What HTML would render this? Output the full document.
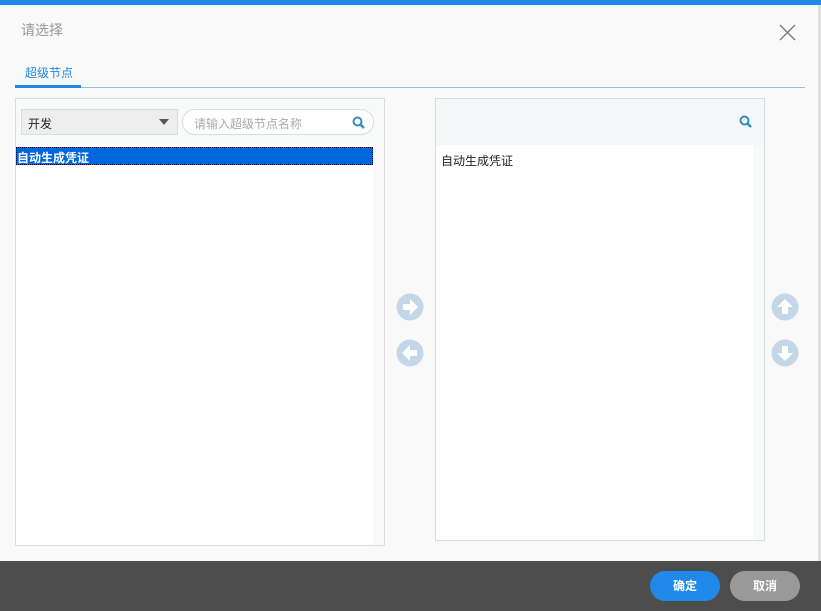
<!DOCTYPE html>
<html><head><meta charset="utf-8"><style>
*{margin:0;padding:0;box-sizing:border-box}
body{width:821px;height:611px;background:#f9f9f9;font-family:"Liberation Sans","Noto Sans CJK SC",sans-serif;position:relative;overflow:hidden;font-size:12px}
.abs{position:absolute}
</style></head><body>
<div class="abs" style="left:0;top:0;width:821px;height:5px;background:#2088e8"></div>
<div class="abs" style="left:818px;top:5px;width:3px;height:556px;background:#e0e0e0"></div>
<div class="abs" style="left:21px;top:20px;font-size:14px;color:#999">请选择</div>
<svg class="abs" style="left:779px;top:24px" width="17" height="17"><path d="M1 1L16 16M16 1L1 16" stroke="#777" stroke-width="1.3"/></svg>
<div class="abs" style="left:25px;top:64px;font-size:12px;color:#2088e8">超级节点</div>
<div class="abs" style="left:15px;top:87px;width:790px;height:1px;background:#8fbef0"></div>
<div class="abs" style="left:15px;top:85px;width:66px;height:3px;background:#2088e8"></div>

<div class="abs" style="left:15px;top:98px;width:370px;height:448px;border:1px solid #d9dde0;background:#f8f9f9"></div>
<div class="abs" style="left:21px;top:109px;width:157px;height:26px;background:#eeeeee;border:1px solid #dddddd;color:#222;padding:5px 6px;font-size:12px">开发</div>
<div class="abs" style="left:159px;top:119px;width:0;height:0;border-left:5px solid transparent;border-right:5px solid transparent;border-top:6px solid #556"></div>
<div class="abs" style="left:182px;top:109px;width:192px;height:26px;background:#fff;border:1px solid #dcdcdc;border-radius:13px;color:#aaa;padding:5px 11px;font-size:12px">请输入超级节点名称</div>
<svg class="abs" style="left:352px;top:116px" width="14" height="14"><circle cx="5.5" cy="5.5" r="4" fill="none" stroke="#2f8fc0" stroke-width="2"/><path d="M8.5 8.5L12 12" stroke="#2f8fc0" stroke-width="2.5"/></svg>
<div class="abs" style="left:16px;top:145px;width:357px;height:400px;background:#fff"></div>
<div class="abs" style="left:16px;top:147px;width:357px;height:18px;background:#0066dd;border:1px dotted #003;color:#fff;font-weight:bold;font-size:12px;padding:1px 0 0 0">自动生成凭证</div>

<div class="abs" style="left:435px;top:98px;width:330px;height:443px;border:1px solid #d9dde0;background:#f8f9f9"></div>
<div class="abs" style="left:436px;top:99px;width:328px;height:46px;background:#f3f7f8"></div>
<svg class="abs" style="left:739px;top:115px" width="14" height="14"><circle cx="5.5" cy="5.5" r="4" fill="none" stroke="#2f8fc0" stroke-width="2"/><path d="M8.5 8.5L12 12" stroke="#2f8fc0" stroke-width="2.5"/></svg>
<div class="abs" style="left:436px;top:145px;width:317px;height:395px;background:#fff;color:#222;padding:7px 5px;font-size:12px">自动生成凭证</div>

<svg class="abs" style="left:396px;top:293px" width="28" height="28"><circle cx="14" cy="14" r="13.5" fill="#c3d7e8"/><path d="M7 11h7v-5l8 8-8 8v-5h-7z" fill="#fff"/></svg>
<svg class="abs" style="left:396px;top:339px" width="28" height="28"><circle cx="14" cy="14" r="13.5" fill="#c3d7e8"/><path d="M21 11h-7v-5l-8 8 8 8v-5h7z" fill="#fff"/></svg>
<svg class="abs" style="left:771px;top:293px" width="28" height="28"><circle cx="14" cy="14" r="13.5" fill="#c3d7e8"/><path d="M11 21v-7h-5l8-8 8 8h-5v7z" fill="#fff"/></svg>
<svg class="abs" style="left:771px;top:339px" width="28" height="28"><circle cx="14" cy="14" r="13.5" fill="#c3d7e8"/><path d="M11 7v7h-5l8 8 8-8h-5v-7z" fill="#fff"/></svg>

<div class="abs" style="left:0;top:561px;width:821px;height:50px;background:#4d4d4d"></div>
<div class="abs" style="left:650px;top:571px;width:70px;height:30px;background:#2088e8;border-radius:15px;color:#fff;font-weight:bold;text-align:center;line-height:30px">确定</div>
<div class="abs" style="left:730px;top:571px;width:70px;height:30px;background:#999;border-radius:15px;color:#fff;font-weight:bold;text-align:center;line-height:30px">取消</div>
</body></html>
